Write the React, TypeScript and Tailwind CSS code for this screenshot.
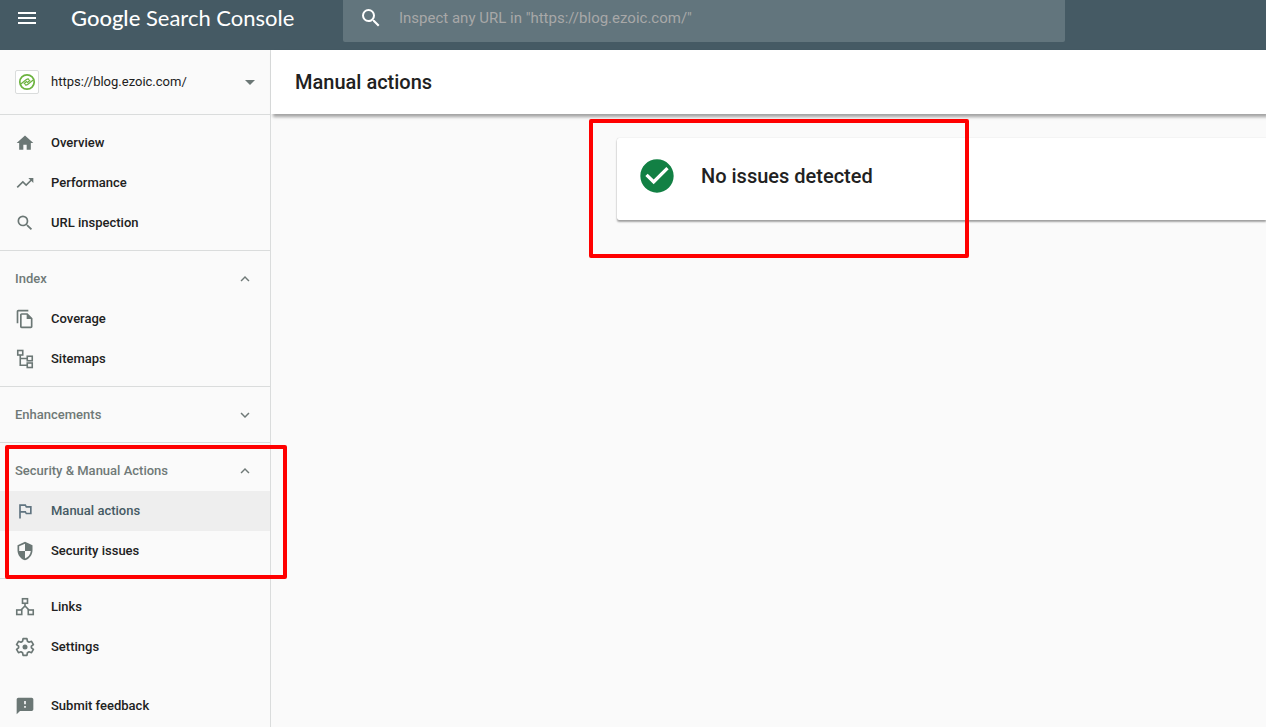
import { useState } from "react";
import type { ReactNode } from "react";
import {
  MdArrowDropDown,
  MdCheckCircle,
  MdFeedback,
  MdHome,
  MdKeyboardArrowDown,
  MdKeyboardArrowUp,
  MdMenu,
  MdOutlineFileCopy,
  MdOutlinedFlag,
  MdSearch,
  MdSecurity,
  MdTrendingUp,
} from "react-icons/md";

const SitemapIcon = () => (
  <svg viewBox="0 0 20 20" className="size-5" fill="none" stroke="currentColor" strokeWidth="1.6" aria-hidden="true">
    <rect x="2.75" y="1.5" width="5" height="4.5" />
    <rect x="12.25" y="7.25" width="5" height="4.5" />
    <rect x="12.25" y="14" width="5" height="4.5" />
    <path d="M5.25 6V16.25H12.25M5.25 9.5H12.25" />
  </svg>
);

const LinksIcon = () => (
  <svg viewBox="0 0 20 20" className="size-5" fill="none" stroke="currentColor" strokeWidth="1.6" aria-hidden="true">
    <rect x="7.5" y="1.75" width="5" height="4.5" />
    <rect x="1.75" y="13" width="5" height="4.5" />
    <rect x="13.25" y="13" width="5" height="4.5" />
    <path d="M10 6.25V9.5M6 13L10 9L14 13" />
  </svg>
);

const GearIcon = () => (
  <svg viewBox="0 0 20 20" className="size-5" fill="none" stroke="currentColor" strokeWidth="1.7" strokeLinejoin="round" aria-hidden="true">
    <path d="M8.1 1.7h3.8l.5 2.5 1.7 1 2.4-.9 1.9 3.3-2 1.6v1.6l2 1.6-1.9 3.3-2.4-.9-1.7 1-.5 2.5H8.1l-.5-2.5-1.7-1-2.4.9-1.9-3.3 2-1.6V9.2l-2-1.6 1.9-3.3 2.4.9 1.7-1z" />
    <circle cx="10" cy="10" r="2.5" fill="currentColor" stroke="none" />
  </svg>
);

const EzoicIcon = () => (
  <svg viewBox="0 0 18 18" className="size-[18px] shrink-0" fill="none" stroke="#6cb33f" strokeLinecap="round" aria-hidden="true">
    <circle cx="9" cy="9" r="7.2" strokeWidth="1.7" />
    <path d="M2.8 11L8.4 6.6Q10.4 5.2 10.8 6.6M15.2 7L9.6 11.4Q7.6 12.8 7.2 11.4M6.2 10.4L8.6 8.6M9.4 9.4L11.8 7.6" strokeWidth="1.3" />
  </svg>
);

type NavItemProps = { icon: ReactNode; label: string; active?: boolean };

function NavItem({ icon, label, active = false }: NavItemProps) {
  return (
    <a
      href="#"
      aria-current={active ? "page" : undefined}
      className={`flex h-10 items-center gap-4 pl-[15px] ${
        active ? "bg-[#eeeeee] text-[#455a64]" : "text-[#212121] hover:bg-[#f1f1f1]"
      }`}
    >
      <span className={active ? "text-[#607480]" : "text-[#6b7775]"}>{icon}</span>
      {label}
    </a>
  );
}

type NavGroupProps = { title?: string; defaultOpen?: boolean; children?: ReactNode };

function NavGroup({ title, defaultOpen = true, children }: NavGroupProps) {
  const [open, setOpen] = useState(defaultOpen);

  return (
    <div className="border-b border-[#dadcdc] pt-2 pb-[7px]">
      {title && (
        <button
          type="button"
          aria-expanded={open}
          onClick={() => setOpen(!open)}
          className="flex h-10 w-full items-center justify-between pr-4 pl-[15px] text-[#6f7977]"
        >
          {title}
          {open ? <MdKeyboardArrowUp className="size-[18px]" /> : <MdKeyboardArrowDown className="size-[18px]" />}
        </button>
      )}
      {(open || !title) && children}
    </div>
  );
}

function Header() {
  return (
    <header className="flex h-[50px] bg-[#455a64] text-white">
      <div className="flex w-[343px] shrink-0 items-start pl-[15px]">
        <button type="button" aria-label="Main menu" className="mt-1.5">
          <MdMenu className="size-6" />
        </button>
        <a href="#" className="ml-8 pt-1 font-[Lato,sans-serif] text-[22px] leading-7 whitespace-nowrap">
          <span className="font-medium">Google</span> Search Console
        </a>
      </div>
      <form className="flex h-[42px] w-[722px] items-start rounded-b-xs bg-[#62757d] pt-1.5 pl-4">
        <MdSearch className="size-6 shrink-0" />
        <input
          type="text"
          aria-label="Inspect any URL"
          placeholder={'Inspect any URL in "https://blog.ezoic.com/"'}
          className="ml-4 h-6 flex-1 bg-transparent text-[15px] outline-none placeholder:text-[#a8a8a8]"
        />
      </form>
    </header>
  );
}

function Sidebar() {
  return (
    <aside className="w-[271px] shrink-0 border-r border-[#dadcdc] text-[13px] font-medium">
      <button
        type="button"
        className="flex h-[65px] w-full items-center border-b border-[#dadcdc] pr-2 pl-[15px] text-left font-normal text-[#212121]"
      >
        <span className="flex size-6 items-center justify-center rounded-xs border border-[#dadcdc] bg-white">
          <EzoicIcon />
        </span>
        <span className="ml-3 flex-1">https://blog.ezoic.com/</span>
        <MdArrowDropDown className="size-6 text-[#6b7775]" />
      </button>

      <nav>
        <NavGroup>
          <NavItem icon={<MdHome className="size-5" />} label="Overview" />
          <NavItem icon={<MdTrendingUp className="size-5" />} label="Performance" />
          <NavItem icon={<MdSearch className="size-5" />} label="URL inspection" />
        </NavGroup>
        <NavGroup title="Index">
          <NavItem icon={<MdOutlineFileCopy className="size-5" />} label="Coverage" />
          <NavItem icon={<SitemapIcon />} label="Sitemaps" />
        </NavGroup>
        <NavGroup title="Enhancements" defaultOpen={false} />
        <div className="relative">
          <NavGroup title="Security & Manual Actions">
            <NavItem icon={<MdOutlinedFlag className="size-5" />} label="Manual actions" active />
            <NavItem icon={<MdSecurity className="size-5" />} label="Security issues" />
          </NavGroup>
          {/* highlight */}
          <div className="pointer-events-none absolute top-0.5 -right-[17px] bottom-0 left-[5px] rounded-xs border-4 border-[#ff0000]" />
        </div>
        <div className="pt-2">
          <NavItem icon={<LinksIcon />} label="Links" />
          <NavItem icon={<GearIcon />} label="Settings" />
        </div>
        <div className="mt-[19px]">
          <NavItem icon={<MdFeedback className="size-5" />} label="Submit feedback" />
        </div>
      </nav>
    </aside>
  );
}

export default function App() {
  return (
    <div className="flex min-h-svh flex-col overflow-hidden bg-[#fafafa] font-[Roboto,sans-serif] text-[#212121]">
      <Header />
      <div className="flex flex-1">
        <Sidebar />
        <main className="min-w-0 flex-1">
          <div className="flex h-16 items-center bg-white pl-6 shadow-[2px_3px_3px_rgba(0,0,0,0.35)]">
            <h1 className="text-[20px] font-medium">Manual actions</h1>
          </div>
          <div className="relative mt-6 ml-[346px]">
            <section className="flex h-[82px] items-center rounded-l-xs bg-white pb-1.5 pl-5 shadow-[0_2px_2px_rgba(0,0,0,0.35),0_0_1px_rgba(0,0,0,0.25)]">
              <MdCheckCircle className="size-10 text-[#128044]" />
              <h2 className="ml-6 text-[20px] font-medium">No issues detected</h2>
            </section>
            {/* highlight */}
            <div className="pointer-events-none absolute -top-[19px] -left-7 h-[139px] w-[380px] rounded-xs border-4 border-[#ff0000]" />
          </div>
        </main>
      </div>
    </div>
  );
}
